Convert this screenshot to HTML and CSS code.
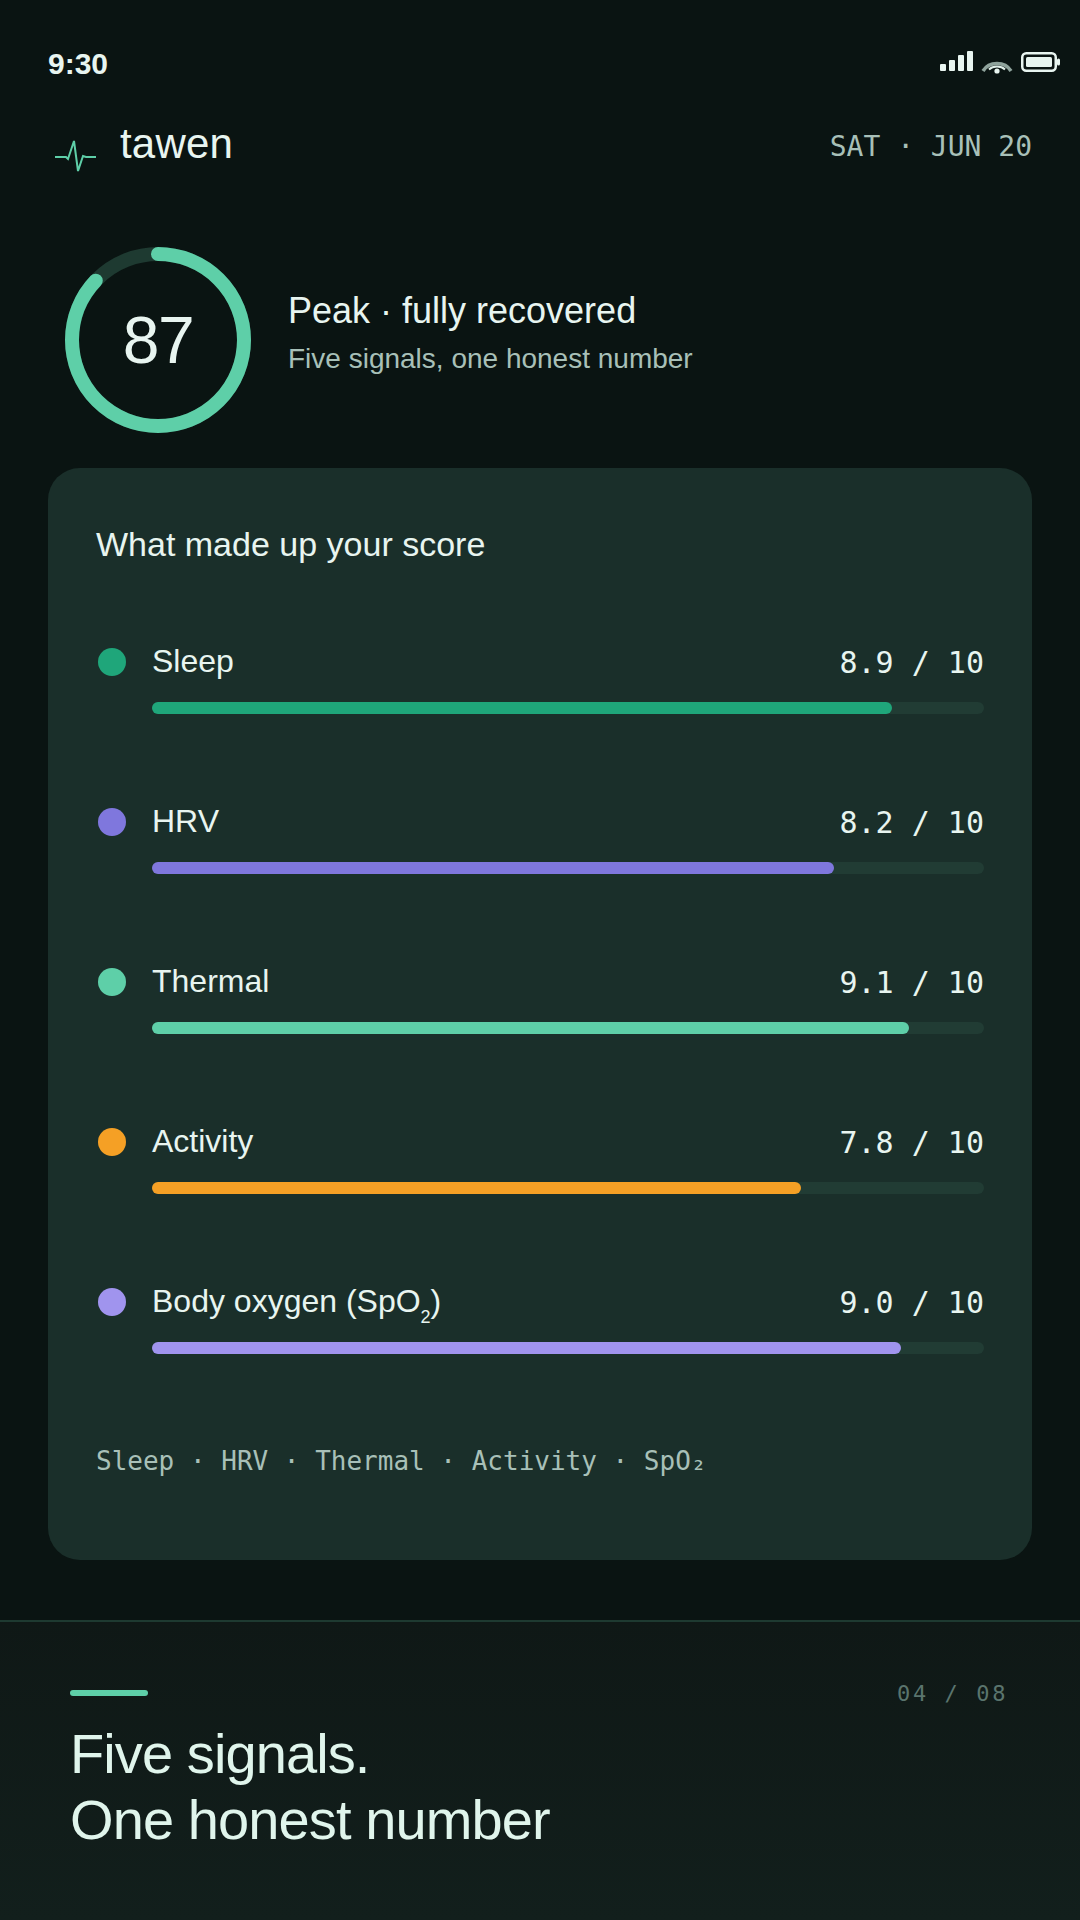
FILE: index.html
```html
<!DOCTYPE html>
<html lang="en">
<head>
  <meta charset="UTF-8">
  <meta name="viewport" content="width=device-width, initial-scale=1.0">
  <title>tawen</title>
  <link rel="stylesheet" href="styles.css">
</head>
<body>
  <div class="screen">
    <div class="status">
      <span class="time">9:30</span>
      <div class="status-icons">
        <svg class="signal-icon" width="33" height="20" viewBox="0 0 33 20" fill="#e8f5f0">
          <rect x="0" y="13" width="6" height="7" rx="1"/>
          <rect x="9" y="9" width="6" height="11" rx="1"/>
          <rect x="18" y="4" width="6" height="16" rx="1"/>
          <rect x="27" y="0" width="6" height="20" rx="1"/>
        </svg>
        <svg class="wifi-icon" width="32" height="14" viewBox="0 0 32 14" fill="none">
          <path d="M2 11 C8 1 24 1 30 11" stroke="#8fa39c" stroke-width="3.5"/>
          <path d="M8 9.5 C12 5.5 20 5.5 24 9.5" stroke="#dfeee8" stroke-width="2"/>
          <circle cx="16" cy="11" r="2.6" fill="#e8f5f0"/>
        </svg>
        <svg class="battery-icon" width="40" height="20" viewBox="0 0 40 20" fill="none">
          <rect x="1.25" y="1.25" width="33.5" height="17.5" rx="4" stroke="#e8f5f0" stroke-width="2.5"/>
          <rect x="5" y="5" width="26" height="10" rx="1.5" fill="#e8f5f0"/>
          <rect x="36" y="6.5" width="3" height="7" rx="1.5" fill="#e8f5f0"/>
        </svg>
      </div>
    </div>

    <header class="topbar">
      <div class="brand">
        <svg class="pulse" width="42" height="32" viewBox="0 0 42 32" fill="none">
          <path d="M0 17 H11 L13 19 L19 1 L23 31 L28 16 L31 17 H41" stroke="#5ecfa8" stroke-width="2"/>
        </svg>
        <span class="brand-name">tawen</span>
      </div>
      <span class="date">SAT · JUN 20</span>
    </header>

    <section class="score">
      <div class="ring">
        <svg width="186" height="186" viewBox="0 0 186 186" fill="none">
          <circle cx="93" cy="93" r="86" stroke="#1e3a31" stroke-width="14"/>
          <circle cx="93" cy="93" r="86" stroke="#5ecfa8" stroke-width="14" stroke-linecap="round"
            stroke-dasharray="470 540.4" transform="rotate(-90 93 93)"/>
        </svg>
        <span class="ring-value">87</span>
      </div>
      <div class="score-text">
        <h1 class="score-title">Peak · fully recovered</h1>
        <p class="score-sub">Five signals, one honest number</p>
      </div>
    </section>

    <section class="card">
      <h2 class="card-title">What made up your score</h2>

      <div class="signal">
        <span class="dot sleep"></span>
        <div class="signal-body">
          <div class="signal-head"><span>Sleep</span><span class="num">8.9 / 10</span></div>
          <div class="track"><div class="fill sleep" style="width: 89%"></div></div>
        </div>
      </div>
      <div class="signal">
        <span class="dot hrv"></span>
        <div class="signal-body">
          <div class="signal-head"><span>HRV</span><span class="num">8.2 / 10</span></div>
          <div class="track"><div class="fill hrv" style="width: 82%"></div></div>
        </div>
      </div>
      <div class="signal">
        <span class="dot thermal"></span>
        <div class="signal-body">
          <div class="signal-head"><span>Thermal</span><span class="num">9.1 / 10</span></div>
          <div class="track"><div class="fill thermal" style="width: 91%"></div></div>
        </div>
      </div>
      <div class="signal">
        <span class="dot activity"></span>
        <div class="signal-body">
          <div class="signal-head"><span>Activity</span><span class="num">7.8 / 10</span></div>
          <div class="track"><div class="fill activity" style="width: 78%"></div></div>
        </div>
      </div>
      <div class="signal">
        <span class="dot oxygen"></span>
        <div class="signal-body">
          <div class="signal-head"><span>Body oxygen (SpO<sub>2</sub>)</span><span class="num">9.0 / 10</span></div>
          <div class="track"><div class="fill oxygen" style="width: 90%"></div></div>
        </div>
      </div>

      <p class="legend">Sleep · HRV · Thermal · Activity · SpO₂</p>
    </section>

    <footer class="caption">
      <div class="caption-top">
        <div class="accent"></div>
        <span class="page">04 / 08</span>
      </div>
      <h2 class="caption-title">Five signals.<br>One honest number</h2>
    </footer>
  </div>
</body>
</html>
```

FILE: styles.css
```css
body {
  margin: 0;
  padding: 0;
  background-color: #0a1412;
  font-family: "Liberation Sans", Arial, sans-serif;
  color: #e8f5f0;
}
.screen {
  width: 1080px;
  height: 1920px;
  display: flex;
  flex-direction: column;
  overflow: hidden;
}
.status {
  display: flex;
  justify-content: space-between;
  align-items: center;
  height: 28px;
  padding: 50px 19px 0 48px;
}
.time {
  font-size: 30px;
  font-weight: 700;
}
.status-icons {
  display: flex;
  align-items: flex-end;
  gap: 8px;
  margin-top: -6px;
}
.signal-icon {
  margin-bottom: 1px;
}
.wifi-icon {
  margin-bottom: -2px;
}
.topbar {
  display: flex;
  justify-content: space-between;
  align-items: center;
  margin-top: 42px;
  padding: 0 48px 0 55px;
}
.brand {
  display: flex;
  align-items: center;
  gap: 23px;
}
.pulse {
  margin: 20px 0 -4px;
}
.brand-name {
  font-size: 42px;
  letter-spacing: 0.2px;
}
.date {
  padding-top: 4px;
  font-family: "DejaVu Sans Mono", monospace;
  font-size: 28px;
  color: #a8c0b8;
}
.score {
  display: flex;
  align-items: center;
  gap: 37px;
  margin-top: 79px;
  padding: 0 65px;
}
.ring {
  position: relative;
  width: 186px;
  height: 186px;
}
.ring svg {
  display: block;
}
.ring-value {
  position: absolute;
  inset: 0;
  display: flex;
  align-items: center;
  justify-content: center;
  font-size: 66px;
  letter-spacing: -1.5px;
}
.score-text {
  margin-bottom: 16px;
}
.score-title {
  margin: 0;
  font-size: 36px;
  font-weight: 400;
}
.score-sub {
  margin: 11px 0 0;
  font-size: 28px;
  color: #a8c0b8;
}
.card {
  margin: 35px 48px 0;
  height: 1092px;
  box-sizing: border-box;
  padding: 57px 48px 0;
  background-color: #1a2f2a;
  border-radius: 32px;
}
.card-title {
  margin: 0 0 69px;
  font-size: 34px;
  font-weight: 400;
}
.signal {
  display: flex;
  gap: 26px;
  height: 160px;
}
.dot {
  flex: none;
  width: 28px;
  height: 28px;
  margin: 15px 0 0 2px;
  border-radius: 50%;
}
.signal-body {
  flex: 1;
}
.signal-head {
  display: flex;
  justify-content: space-between;
  align-items: center;
  height: 56px;
  font-size: 32px;
}
.signal-head sub {
  font-size: 18px;
  line-height: 0;
  vertical-align: -11px;
}
.num {
  padding-top: 2px;
  font-family: "DejaVu Sans Mono", monospace;
  font-size: 30px;
}
.track {
  height: 12px;
  margin-top: 13px;
  border-radius: 6px;
  background-color: #213c34;
}
.fill {
  height: 100%;
  border-radius: 6px;
}
.sleep { background-color: #1fa67a; }
.hrv { background-color: #7f77dd; }
.thermal { background-color: #5ecfa8; }
.activity { background-color: #f5a025; }
.oxygen { background-color: #a094ee; }
.legend {
  margin: 13px 0 0;
  font-family: "DejaVu Sans Mono", monospace;
  font-size: 26px;
  color: #a8c0b8;
}
.caption {
  flex: 1;
  margin-top: 60px;
  padding: 68px 72px 0 70px;
  border-top: 2px solid #1e3a31;
  background: linear-gradient(#0f1816, #121f1c);
}
.caption-top {
  display: flex;
  justify-content: space-between;
  align-items: flex-start;
}
.accent {
  width: 78px;
  height: 6px;
  border-radius: 3px;
  background-color: #5ecfa8;
}
.page {
  margin-top: -9px;
  font-family: "DejaVu Sans Mono", monospace;
  font-size: 22px;
  letter-spacing: 2.6px;
  color: #5a746d;
}
.caption-title {
  margin: 15px 0 0;
  font-size: 56px;
  line-height: 66px;
  font-weight: 400;
  letter-spacing: -0.9px;
  color: #e0f5ec;
}
```
